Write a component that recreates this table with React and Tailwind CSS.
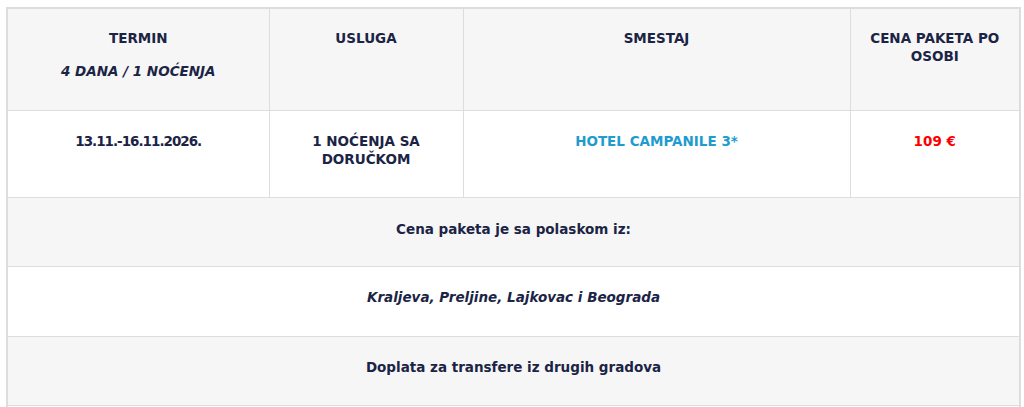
import React from 'react';

const font = { fontFamily: '"DejaVu Sans", Inter, sans-serif' };

export default function App() {
  return (
    <div className="bg-white w-[1024px] h-[407px] overflow-hidden pt-[7px] pl-[6px]" style={font}>
      <table className="w-[1013px] border-collapse border-2 border-[#dddddd] text-[13.5px] leading-[18px] text-[#1b2445] text-center table-fixed">
        <colgroup>
          <col className="w-[262px]" />
          <col className="w-[194px]" />
          <col className="w-[387px]" />
          <col className="w-[170px]" />
        </colgroup>
        <tbody>
          <tr className="h-[102px] bg-[#f6f6f6]">
            <td className="border border-[#dddddd] align-top pt-[20px] px-3">
              <p className="font-bold">TERMIN</p>
              <p className="font-bold italic mt-[15px]">4 DANA / 1 NOĆENJA</p>
            </td>
            <td className="border border-[#dddddd] align-top pt-[20px] px-3 font-bold">USLUGA</td>
            <td className="border border-[#dddddd] align-top pt-[20px] px-3 font-bold">SMESTAJ</td>
            <td className="border border-[#dddddd] align-top pt-[20px] px-3 font-bold">CENA PAKETA PO OSOBI</td>
          </tr>
          <tr className="h-[87px] bg-white">
            <td className="border border-[#dddddd] align-top pt-[21px] px-3 font-bold tracking-[-1px]">13.11.-16.11.2026.</td>
            <td className="border border-[#dddddd] align-top pt-[21px] px-6 font-semibold">1 NOĆENJA SA DORUČKOM</td>
            <td className="border border-[#dddddd] align-top pt-[21px] px-3 font-semibold text-[#1f9bcf]">HOTEL CAMPANILE 3*</td>
            <td className="border border-[#dddddd] align-top pt-[21px] px-3 font-bold text-[#ff0000]">109 €</td>
          </tr>
          <tr className="h-[69px] bg-[#f6f6f6]">
            <td colSpan={4} className="border border-[#dddddd] align-top pt-[22px] font-bold">Cena paketa je sa polaskom iz:</td>
          </tr>
          <tr className="h-[70px] bg-white">
            <td colSpan={4} className="border border-[#dddddd] align-top pt-[21px] font-bold italic">Kraljeva, Preljine, Lajkovac i Beograda</td>
          </tr>
          <tr className="h-[69px] bg-[#f6f6f6]">
            <td colSpan={4} className="border border-[#dddddd] align-top pt-[21px] font-bold">Doplata za transfere iz drugih gradova</td>
          </tr>
          <tr className="h-[69px] bg-white">
            <td colSpan={4} className="border border-[#dddddd] align-top pt-[21px] font-bold">&nbsp;</td>
          </tr>
        </tbody>
      </table>
    </div>
  );
}
